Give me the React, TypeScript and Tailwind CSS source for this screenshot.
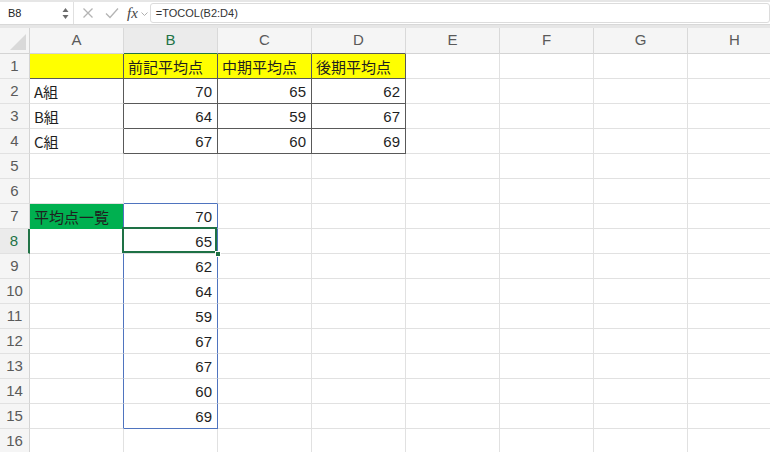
import React from "react";

const COLS = ["A", "B", "C", "D", "E", "F", "G", "H"];
const GRID = "border-r-[#e1e1e1]";
const GRIDB = "border-b-[#e1e1e1]";
const DARKR = "border-r-[#595959]";
const DARKB = "border-b-[#595959]";
const BLUER = "border-r-[#4f74bf]";
const BLUEB = "border-b-[#4f74bf]";

type CellData = { text?: string; num?: boolean; bg?: string };

const data: Record<string, CellData> = {
  "1-0": { bg: "bg-[#ffff00]" },
  "1-1": { text: "前記平均点", bg: "bg-[#ffff00]" },
  "1-2": { text: "中期平均点", bg: "bg-[#ffff00]" },
  "1-3": { text: "後期平均点", bg: "bg-[#ffff00]" },
  "2-0": { text: "A組" },
  "2-1": { text: "70", num: true },
  "2-2": { text: "65", num: true },
  "2-3": { text: "62", num: true },
  "3-0": { text: "B組" },
  "3-1": { text: "64", num: true },
  "3-2": { text: "59", num: true },
  "3-3": { text: "67", num: true },
  "4-0": { text: "C組" },
  "4-1": { text: "67", num: true },
  "4-2": { text: "60", num: true },
  "4-3": { text: "69", num: true },
  "7-0": { text: "平均点一覧", bg: "bg-[#00b050]" },
  "7-1": { text: "70", num: true },
  "8-1": { text: "65", num: true },
  "9-1": { text: "62", num: true },
  "10-1": { text: "64", num: true },
  "11-1": { text: "59", num: true },
  "12-1": { text: "67", num: true },
  "13-1": { text: "67", num: true },
  "14-1": { text: "60", num: true },
  "15-1": { text: "69", num: true },
};

function borderClasses(r: number, c: number): string {
  let right = GRID;
  let bottom = GRIDB;
  if (r >= 1 && r <= 4 && c <= 3) right = DARKR;
  if (r >= 1 && r <= 4 && c >= 1 && c <= 3) bottom = DARKB;
  if (r === 1 && c === 0) bottom = DARKB;
  if (r >= 7 && r <= 15 && c <= 1) right = BLUER;
  if ((r === 6 || r === 15) && c === 1) bottom = BLUEB;
  if (r === 7 && c === 0) bottom = "border-b-[#00b050]";
  return `border-r border-b ${right} ${bottom}`;
}

function Cell({ r, c }: { r: number; c: number }) {
  const d = data[`${r}-${c}`] || {};
  const selected = r === 8 && c === 1;
  return (
    <div
      className={`relative flex items-center overflow-visible whitespace-nowrap text-[15px] text-[#1f1f1f] ${borderClasses(r, c)} ${d.bg || "bg-white"} ${d.num ? "justify-end pr-[5px]" : "justify-start pl-[4px]"}`}
      style={{ fontFamily: d.num ? '"Liberation Sans", Arial, sans-serif' : '"Noto Sans CJK JP", "Liberation Sans", sans-serif' }}
    >
      <span className="leading-none pt-[1px]">{d.text}</span>
      {selected && (
        <>
          <div className="absolute left-[-2px] top-[-2px] w-[calc(100%+2px)] h-[calc(100%+2px)] border-2 border-[#1e7145] z-10 pointer-events-none" />
          <div className="absolute right-[-4px] bottom-[-4px] w-[6px] h-[6px] bg-[#1e7145] border border-white z-20" />
        </>
      )}
    </div>
  );
}

function Toolbar() {
  return (
    <div className="h-[28px] bg-[#e6e6e6] pt-[2px]">
      <div className="h-[23px] bg-white flex items-center border-b border-[#d8d8d8]">
        <div className="w-[74px] h-full flex items-center justify-between pl-[8px] pr-[4px] border-r border-[#e0e0e0]">
          <span className="text-[11px] text-[#222]" style={{ fontFamily: '"Liberation Sans", Arial, sans-serif' }}>B8</span>
          <svg width="7" height="13" viewBox="0 0 7 13">
            <path d="M3.5 1 L6.5 5 L0.5 5 Z" fill="#6b6b6b" />
            <path d="M3.5 12 L6.5 8 L0.5 8 Z" fill="#6b6b6b" />
          </svg>
        </div>
        <div className="w-[6px]" />
        <svg width="12" height="12" viewBox="0 0 12 12" className="ml-[2px]">
          <path d="M1.5 1.5 L10.5 10.5 M10.5 1.5 L1.5 10.5" stroke="#b4b4b4" strokeWidth="1.3" fill="none" />
        </svg>
        <svg width="14" height="12" viewBox="0 0 14 12" className="ml-[11px]">
          <path d="M1 6.5 L5 10.5 L13 1.5" stroke="#b4b4b4" strokeWidth="1.3" fill="none" />
        </svg>
        <span className="ml-[8px] text-[15px] italic text-[#444] leading-none" style={{ fontFamily: '"Liberation Serif", "Times New Roman", serif' }}>fx</span>
        <svg width="7" height="5" viewBox="0 0 7 5" className="ml-[3px] mt-[2px]">
          <path d="M0.5 0.5 L3.5 3.5 L6.5 0.5" stroke="#b0b0b0" strokeWidth="1" fill="none" />
        </svg>
        <div className="ml-[2px] flex-1 h-[20px] border border-[#dcdcdc] rounded-[3px] flex items-center pl-[5px]">
          <span className="text-[11px] text-[#333]" style={{ fontFamily: '"Liberation Sans", Arial, sans-serif' }}>=TOCOL(B2:D4)</span>
        </div>
      </div>
    </div>
  );
}

export default function App() {
  const rows = Array.from({ length: 16 }, (_, i) => i + 1);
  return (
    <div className="w-[770px] h-[452px] overflow-hidden bg-white">
      <Toolbar />
      <div
        className="grid grid-cols-[30px_repeat(8,94px)] grid-rows-[26px_repeat(16,25px)] w-[782px]"
        style={{ fontFamily: '"Liberation Sans", Arial, sans-serif' }}
      >
        <div className="relative bg-[#f5f5f5] border-r border-b border-[#d4d4d4]">
          <svg className="absolute right-[3px] bottom-[3px]" width="16" height="16" viewBox="0 0 16 16">
            <path d="M16 0 L16 16 L0 16 Z" fill="#d9d9d9" />
          </svg>
        </div>
        {COLS.map((c, i) => (
          <div
            key={c}
            className={`flex items-center justify-center text-[15px] border-r border-b ${i === 1 ? "bg-[#ebebeb] text-[#217346] border-r-[#d9d9d9] border-b-[#217346]" : i === 2 || i === 3 ? "bg-[#f5f5f5] text-[#5a5a5a] border-r-[#d9d9d9] border-b-[#595959]" : "bg-[#f5f5f5] text-[#5a5a5a] border-r-[#d9d9d9] border-b-[#d4d4d4]"}`}
          >
            {c}
          </div>
        ))}
        {rows.map((r) => (
          <React.Fragment key={r}>
            <div
              className={`flex items-center justify-center text-[15px] border-b ${r === 8 ? "bg-[#ebebeb] text-[#217346] border-r-2 border-r-[#217346] border-b-[#e1e1e1]" : "bg-[#f5f5f5] text-[#5a5a5a] border-r border-r-[#d4d4d4] border-b-[#e1e1e1]"}`}
            >
              {r}
            </div>
            {COLS.map((_, c) => (
              <Cell key={c} r={r} c={c} />
            ))}
          </React.Fragment>
        ))}
      </div>
    </div>
  );
}
